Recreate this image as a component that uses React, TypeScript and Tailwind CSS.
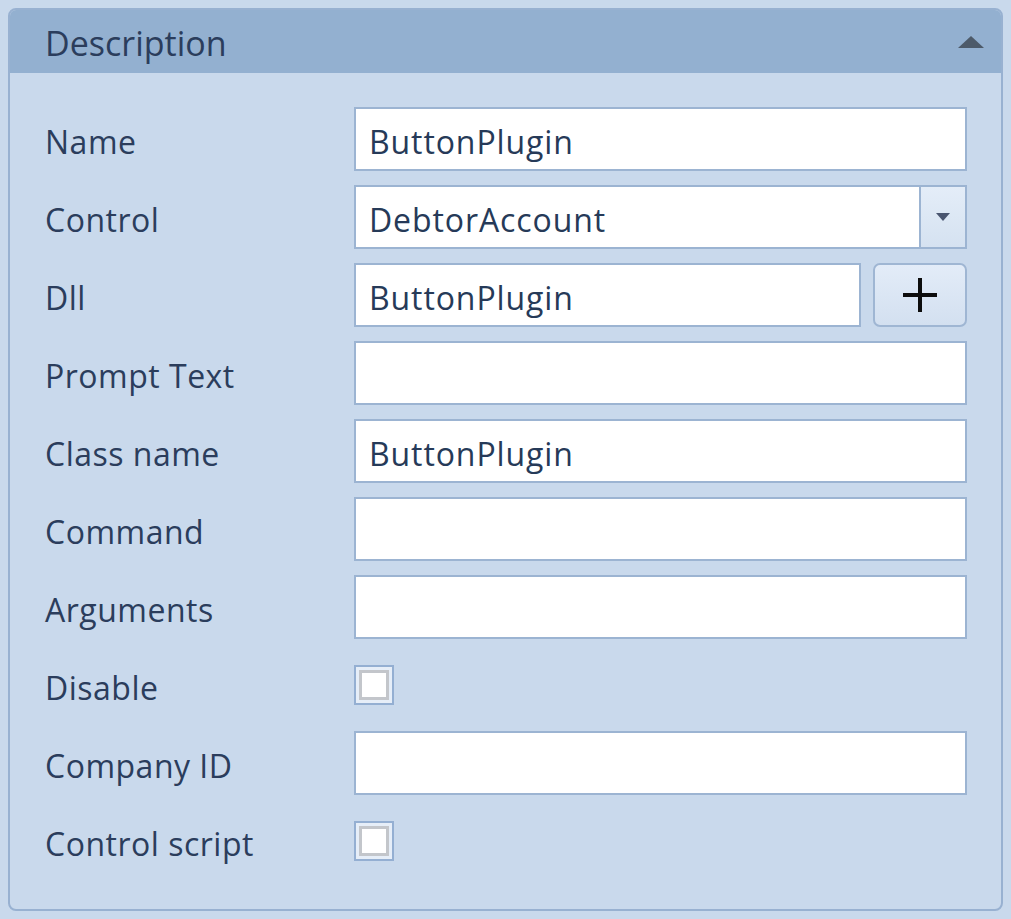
import { ReactNode } from "react"

const font = { fontFamily: '"Open Sans", "Noto Sans", sans-serif' }

function TextBox({ value = "" }: { value?: string }) {
  return (
    <div className="flex h-[64px] flex-1 items-center border-2 border-[#9cb4d2] bg-white px-[13px] pt-[5px] text-[32px] tracking-[0.9px] text-[#263a58]">
      {value}
    </div>
  )
}

function Checkbox() {
  return (
    <div className="flex h-[40px] w-[40px] items-center justify-center border-2 border-[#94afd2] bg-[#e6eef8]">
      <div className="h-[30px] w-[30px] border-[3px] border-[#c3c6cb] bg-white" />
    </div>
  )
}

function Row({ label, children }: { label: string; children: ReactNode }) {
  return (
    <div className="flex h-[64px] items-center">
      <div className="w-[309px] shrink-0 pt-[5px] text-[32px] tracking-[0.5px] text-[#2b3d5c]">{label}</div>
      <div className="flex flex-1 items-center">{children}</div>
    </div>
  )
}

export default function App() {
  return (
    <div className="min-h-[919px] w-[1011px] bg-[#c9d9ec] p-[8px]" style={font}>
      <div className="overflow-hidden rounded-[8px] border-2 border-[#98b1d1] bg-[#c9d9ec]">
        <div className="flex h-[63px] items-center justify-between bg-[#93b0d0] pl-[35px] pr-[17px]">
          <span className="pt-[4px] text-[34px] text-[#2b3d5c]">Description</span>
          <svg width="26" height="12" viewBox="0 0 26 12">
            <polygon points="0,12 13,0 26,12" fill="#4d5a69" />
          </svg>
        </div>
        <div className="flex flex-col gap-[14px] pb-[36px] pl-[35px] pr-[34px] pt-[34px]">
          <Row label="Name">
            <TextBox value="ButtonPlugin" />
          </Row>
          <Row label="Control">
            <div className="flex h-[64px] flex-1 items-center border-2 border-[#9cb4d2] bg-white text-[32px] tracking-[0.9px] text-[#263a58]">
              <span className="flex-1 px-[13px] pt-[5px]">DebtorAccount</span>
              <div className="flex h-full w-[46px] items-center justify-center border-l-2 border-[#9cb4d2] bg-gradient-to-b from-[#e4edf8] to-[#d5e2f1]">
                <svg width="14" height="8" viewBox="0 0 14 8">
                  <polygon points="0,0 14,0 7,8" fill="#4a5670" />
                </svg>
              </div>
            </div>
          </Row>
          <Row label="Dll">
            <TextBox value="ButtonPlugin" />
            <button className="ml-[12px] flex h-[64px] w-[94px] items-center justify-center rounded-[7px] border-2 border-[#9fb6d3] bg-gradient-to-b from-[#e3ecf8] to-[#d3e0f0]">
              <svg width="36" height="36" viewBox="0 0 36 36">
                <path d="M18 1V35M1 18H35" stroke="#0d0d0d" strokeWidth="4" />
              </svg>
            </button>
          </Row>
          <Row label="Prompt Text">
            <TextBox />
          </Row>
          <Row label="Class name">
            <TextBox value="ButtonPlugin" />
          </Row>
          <Row label="Command">
            <TextBox />
          </Row>
          <Row label="Arguments">
            <TextBox />
          </Row>
          <Row label="Disable">
            <Checkbox />
          </Row>
          <Row label="Company ID">
            <TextBox />
          </Row>
          <Row label="Control script">
            <Checkbox />
          </Row>
        </div>
      </div>
    </div>
  )
}
